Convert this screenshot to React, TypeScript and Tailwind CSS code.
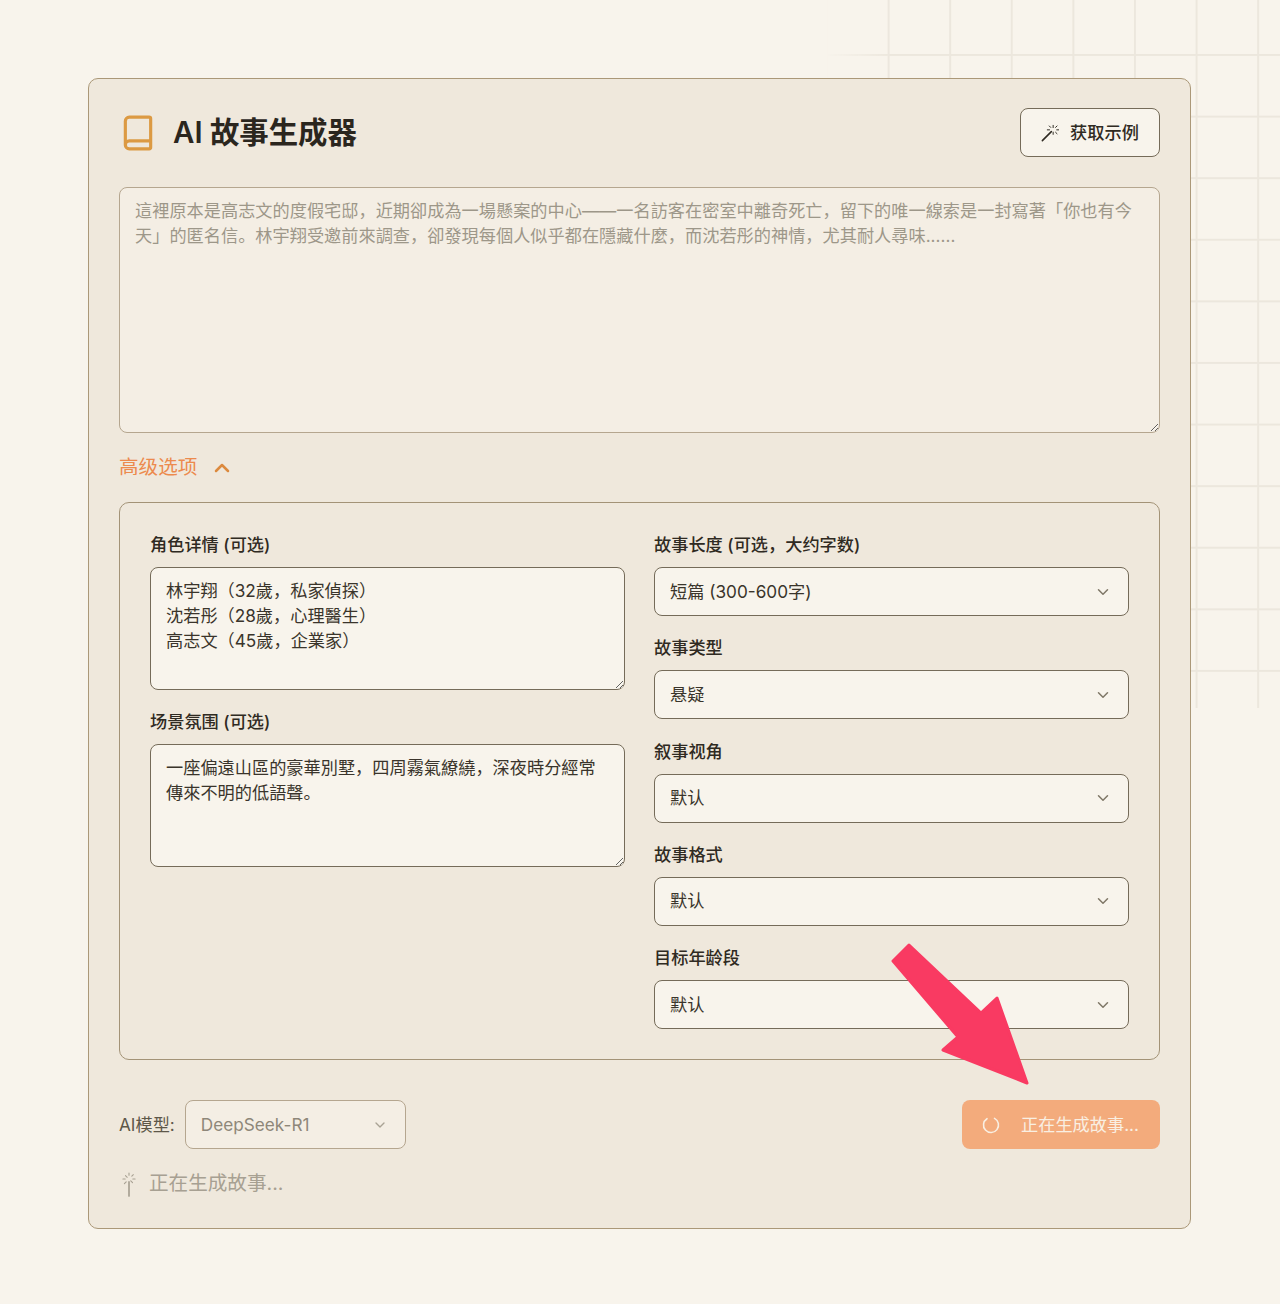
import { Book, ChevronDown, ChevronUp } from "lucide-react";

const fontStack = "font-['Inter','Noto_Sans_CJK_SC',sans-serif]";

function WandIcon({ className }: { className: string }) {
  return (
    <svg className={className} viewBox="0 0 20 20" fill="none" stroke="currentColor" strokeLinecap="round">
      <path d="M1.5 18.5 11.5 8.5" strokeWidth="1.7" />
      <path d="M13.5 1.5v2.5M13.5 9v2.5M7 6.5h2.5M17.5 6.5H20M9.2 2.2l1.6 1.6M16.2 9.2l1.6 1.6M16.2 3.8l1.6-1.6" strokeWidth="1.1" />
    </svg>
  );
}

function Field({ label, children }: { label: string; children: React.ReactNode }) {
  return (
    <div>
      <div className="h-[22px] mb-[11px] text-[17.2px] leading-[22px] font-medium text-[#2f2a22]">{label}</div>
      {children}
    </div>
  );
}

function SelectBox({ value }: { value: string }) {
  return (
    <div className="h-[49px] pl-[15px] pr-4 flex items-center justify-between rounded-lg border border-[#756b59] bg-[#f8f4ec] text-[17.2px] text-[#3a342b]">
      <span>{value}</span>
      <ChevronDown className="w-[18px] h-[18px] text-[#7f7767]" strokeWidth={2} />
    </div>
  );
}

function TextBox({ value }: { value: string }) {
  return (
    <textarea
      readOnly
      defaultValue={value}
      className="block w-full h-[123px] px-[15px] py-[9.5px] rounded-lg border border-[#756b59] bg-[#f8f4ec] text-[17.2px] leading-[25px] text-[#3a342b] outline-none"
    />
  );
}

export default function App() {
  return (
    <div className={`relative min-h-[1304px] bg-[#f8f4ec] pt-[78px] pl-[88px] ${fontStack}`}>
      {/* faded grid top right */}
      <div className="absolute left-[825.5px] top-0 w-[454.5px] h-[708px] bg-[linear-gradient(to_right,#ece7dd_1.5px,transparent_1.5px),linear-gradient(to_bottom,#ece7dd_1.5px,transparent_1.5px)] bg-[size:61.6px_61.6px] bg-[position:0px_-7.6px] [mask-image:linear-gradient(to_right,transparent,black_14%)]" />

      <div className="relative w-[1103px] h-[1151px] px-[30px] pt-[29px] rounded-[10px] border border-[#ab9878] bg-[#efe8dc]">
        <div className="flex justify-between h-[50px]">
          <div className="flex items-center">
            <Book className="w-[38px] h-[38px] text-[#dc9a43]" strokeWidth={2} />
            <h1 className="ml-[16px] text-[29.4px] font-semibold text-[#2b261e]">AI 故事生成器</h1>
          </div>
          <button className="w-[140px] h-[49px] flex items-center justify-center gap-[11px] rounded-lg border border-[#756b59] bg-[#f8f4ec] text-[17.2px] font-medium text-[#2f2a22]">
            <WandIcon className="w-[18px] h-[18px]" />
            获取示例
          </button>
        </div>

        <textarea
          readOnly
          placeholder="這裡原本是高志文的度假宅邸，近期卻成為一場懸案的中心——一名訪客在密室中離奇死亡，留下的唯一線索是一封寫著「你也有今天」的匿名信。林宇翔受邀前來調查，卻發現每個人似乎都在隱藏什麼，而沈若彤的神情，尤其耐人尋味......"
          className="block w-full h-[246px] mt-[29px] px-[15px] py-[9.5px] rounded-lg border border-[#b5a68f] bg-[#f4eee4] text-[17.2px] leading-[25px] outline-none placeholder:text-[#9d9789]"
        />

        <div className="flex items-center h-[24px] mt-[23px] text-[19.6px] text-[#ec8a4d]">
          高级选项
          <ChevronUp className="w-[24px] h-[24px] ml-[13px] text-[#dc8a3e]" strokeWidth={2.5} />
        </div>

        <div className="h-[558px] mt-[22px] px-[30px] pt-[31px] rounded-[10px] border border-[#a39377] grid grid-cols-[475px_475px] gap-x-[29px]">
          <div className="flex flex-col gap-[21px]">
            <Field label="角色详情 (可选)">
              <TextBox value={"林宇翔（32歲，私家偵探）\n沈若彤（28歲，心理醫生）\n高志文（45歲，企業家）"} />
            </Field>
            <Field label="场景氛围 (可选)">
              <TextBox value="一座偏遠山區的豪華別墅，四周霧氣繚繞，深夜時分經常傳來不明的低語聲。" />
            </Field>
          </div>
          <div className="flex flex-col gap-[21.3px]">
            <Field label="故事长度 (可选，大约字数)">
              <SelectBox value="短篇 (300-600字)" />
            </Field>
            <Field label="故事类型">
              <SelectBox value="悬疑" />
            </Field>
            <Field label="叙事视角">
              <SelectBox value="默认" />
            </Field>
            <Field label="故事格式">
              <SelectBox value="默认" />
            </Field>
            <Field label="目标年龄段">
              <SelectBox value="默认" />
            </Field>
          </div>
        </div>

        <div className="flex items-center justify-between h-[49px] mt-[40px]">
          <div className="flex items-center gap-[10px]">
            <span className="text-[17.2px] text-[#5d5749]">AI模型:</span>
            <div className="w-[221px] h-[49px] pl-[15px] pr-[17px] flex items-center justify-between rounded-lg border border-[#b5a68f] bg-[#f4eee4] text-[17.2px] text-[#8e8779]">
              <span>DeepSeek-R1</span>
              <ChevronDown className="w-[16px] h-[16px] text-[#a9a294]" strokeWidth={2} />
            </div>
          </div>
          <button className="w-[198px] h-[49px] pl-[20px] flex items-center gap-[21px] rounded-lg bg-[#f3ab7c] text-[17.2px] text-[#f9efe2]">
            <svg className="w-[18px] h-[18px]" viewBox="0 0 18 18" fill="none" stroke="currentColor" strokeWidth="1.6" strokeLinecap="round">
              <path d="M12.5 2.4A7.5 7.5 0 1 1 5 2.7" />
            </svg>
            正在生成故事...
          </button>
        </div>

        <div className="flex items-center h-[26px] mt-[22px] text-[19.6px] text-[#a7a092]">
          <WandIcon className="w-[20px] h-[20px] -rotate-45 shrink-0" />
          <span className="ml-[10px]">正在生成故事...</span>
        </div>
      </div>

      {/* annotation arrow */}
      <svg className="absolute left-[885px] top-[935px] w-[150px] h-[155px]" viewBox="0 0 150 155">
        <polygon
          points="24,10 96,78 112,63 142,148 58,115 73,102 8,26"
          fill="#f93a62"
          stroke="#f93a62"
          strokeWidth="3"
          strokeLinejoin="round"
        />
      </svg>
    </div>
  );
}
